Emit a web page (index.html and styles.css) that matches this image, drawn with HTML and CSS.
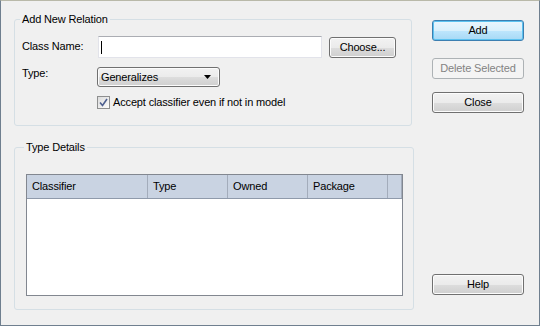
FILE: index.html
```html
<!DOCTYPE html>
<html>
<head>
<meta charset="utf-8">
<link rel="stylesheet" href="styles.css">
</head>
<body>
<div class="window">
  <div class="main">
    <fieldset class="group g1">
      <legend>Add New Relation</legend>
      <div class="row r1">
        <label class="lbl lbl-name">Class Name:</label>
        <div class="textbox"><span class="caret"></span></div>
        <button class="btn choose">Choose...</button>
      </div>
      <div class="row r2">
        <label class="lbl">Type:</label>
        <div class="combo">
          <span class="combo-text">Generalizes</span>
          <svg class="arrow" width="7" height="4" viewBox="0 0 7 4"><path d="M0 0H7L3.5 4Z" fill="#000"/></svg>
        </div>
      </div>
      <div class="row r3">
        <span class="check">
          <svg width="9" height="9" viewBox="0 0 9 9"><path d="M1 4.5L3.5 7.5L8 1" fill="none" stroke="#4d5f8f" stroke-width="1.6"/></svg>
        </span>
        <span class="check-text">Accept classifier even if not in model</span>
      </div>
    </fieldset>
    <fieldset class="group g2">
      <legend>Type Details</legend>
      <div class="list">
        <div class="hdr">
          <div class="col c1">Classifier</div>
          <div class="col c2">Type</div>
          <div class="col c3">Owned</div>
          <div class="col c4">Package</div>
          <div class="col c5"></div>
        </div>
      </div>
    </fieldset>
  </div>
  <div class="side">
    <button class="btn side-btn default">Add</button>
    <button class="btn side-btn disabled">Delete Selected</button>
    <button class="btn side-btn close">Close</button>
    <button class="btn side-btn help">Help</button>
  </div>
</div>
</body>
</html>
```
FILE: styles.css
```css
html, body {
  margin: 0;
  padding: 0;
  background: #f0f0f0;
}
body {
  font-family: "Liberation Sans", Arial, sans-serif;
  font-size: 11px;
  letter-spacing: -0.15px;
  color: #000;
}
.window {
  width: 540px;
  height: 326px;
  box-sizing: border-box;
  border: 1px solid #6f7f8f;
  border-top-color: #b9b9a9;
  background: #f0f0f0;
  display: flex;
  padding: 12px 0 0 13px;
}
.main {
  display: flex;
  flex-direction: column;
  width: 400px;
}
.group {
  margin: 0;
  border: 1px solid #d5dfe5;
  border-radius: 3px;
  box-sizing: border-box;
  min-inline-size: 0;
}
.group legend {
  padding: 0 2px;
  margin-left: -2px;
  line-height: 13px;
  height: 13px;
}
.g1 {
  width: 398px;
  height: 113px;
  padding: 10px 0 0 7px;
}
.g2 {
  width: 400px;
  height: 169px;
  margin-top: 15px;
  padding: 20px 0 0 11px;
}
.row {
  display: flex;
  align-items: flex-start;
}
.lbl {
  width: 76px;
  line-height: 13px;
  flex: none;
}
.lbl-name {
  margin-top: 4px;
}
.r2 .lbl {
  width: 75px;
}
.textbox {
  width: 224px;
  height: 22px;
  box-sizing: border-box;
  background: #fff;
  border: 1px solid #e2e3ea;
  border-top-color: #abadb3;
  display: flex;
  align-items: center;
  padding-left: 2px;
}
.caret {
  width: 1px;
  height: 13px;
  background: #000;
}
.btn {
  font-family: "Liberation Sans", Arial, sans-serif;
  font-size: 11px;
  letter-spacing: -0.15px;
  color: #000;
  border: 1px solid #707070;
  border-radius: 3px;
  background: linear-gradient(#f2f2f2 0%, #ebebeb 50%, #dddddd 51%, #cfcfcf 100%);
  box-shadow: inset 0 0 0 1px #fcfcfc;
  padding: 0;
  margin: 0;
  box-sizing: border-box;
  line-height: 13px;
}
.choose {
  width: 67px;
  height: 21px;
  margin: 1px 0 0 7px;
}
.r2 {
  margin-top: 9px;
}
.combo {
  width: 123px;
  height: 20px;
  box-sizing: border-box;
  border: 1px solid #707070;
  border-radius: 3px;
  background: linear-gradient(#f2f2f2 0%, #ebebeb 50%, #dddddd 51%, #cfcfcf 100%);
  box-shadow: inset 0 0 0 1px #fcfcfc;
  display: flex;
  align-items: center;
  justify-content: space-between;
  padding: 0 8px 0 3px;
}
.combo-text {
  line-height: 13px;
}
.arrow {
  display: block;
}
.r3 {
  margin-top: 9px;
  padding-left: 75px;
  align-items: center;
}
.check {
  width: 13px;
  height: 13px;
  box-sizing: border-box;
  border: 1px solid #8e8f8f;
  background: linear-gradient(135deg, #dcdcdc, #fcfcfc);
  display: flex;
  align-items: center;
  justify-content: center;
  flex: none;
}
.check svg {
  display: block;
}
.check-text {
  margin-left: 3px;
  line-height: 13px;
}
.list {
  width: 377px;
  height: 122px;
  box-sizing: border-box;
  border: 1px solid #828790;
  background: #fff;
}
.hdr {
  display: flex;
  height: 24px;
  background: #c9d3e2;
  border-bottom: 1px solid #8f9aab;
  box-sizing: border-box;
}
.col {
  box-sizing: border-box;
  border-right: 1px solid #a3acbb;
  padding-left: 5px;
  line-height: 23px;
  flex: none;
}
.c1 { width: 121px; }
.c2 { width: 80px; }
.c3 { width: 80px; }
.c4 { width: 80px; }
.c5 { width: 14px; }
.side {
  display: flex;
  flex-direction: column;
  width: 92px;
  margin-left: 18px;
  padding-bottom: 30px;
}
.side-btn {
  width: 92px;
  height: 21px;
  flex: none;
}
.default {
  margin-top: 7px;
  border-color: #3c7fb1;
  background: linear-gradient(#eaf6fd 0%, #d9f0fc 50%, #bee6fd 51%, #a7d9f5 100%);
  box-shadow: inset 0 0 0 1px #5cc2f0;
}
.disabled {
  margin-top: 17px;
  border-color: #adb2b5;
  background: #f4f4f4;
  box-shadow: none;
  color: #838383;
}
.close {
  margin-top: 13px;
}
.help {
  margin-top: auto;
}
```
